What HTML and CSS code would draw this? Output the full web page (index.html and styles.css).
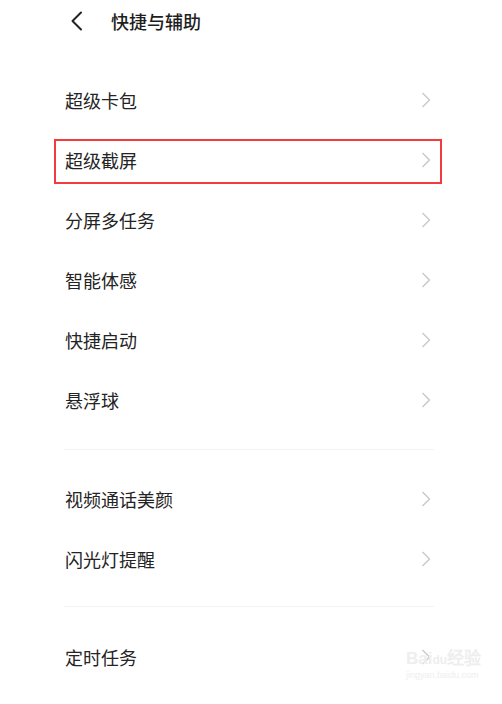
FILE: index.html
```html
<!DOCTYPE html>
<html lang="zh-CN">
<head>
<meta charset="utf-8">
<title>快捷与辅助</title>
<link rel="stylesheet" href="styles.css">
</head>
<body>
<div class="page">
  <header class="header">
    <svg class="back" width="14" height="20" viewBox="0 0 14 20"><path d="M11 1.5 L2.5 10 L11 18.5" fill="none" stroke="#222" stroke-width="2" stroke-linecap="round" stroke-linejoin="round"/></svg>
    <h1 class="title">快捷与辅助</h1>
  </header>
  <section class="group first">
    <div class="row"><span class="label">超级卡包</span><svg class="chev" width="10" height="16" viewBox="0 0 10 16"><path d="M1.5 1 L8.5 8 L1.5 15" fill="none" stroke="#c9c9c9" stroke-width="1.4"/></svg></div>
    <div class="row highlighted"><span class="label">超级截屏</span><svg class="chev" width="10" height="16" viewBox="0 0 10 16"><path d="M1.5 1 L8.5 8 L1.5 15" fill="none" stroke="#c9c9c9" stroke-width="1.4"/></svg><div class="mark"></div></div>
    <div class="row"><span class="label">分屏多任务</span><svg class="chev" width="10" height="16" viewBox="0 0 10 16"><path d="M1.5 1 L8.5 8 L1.5 15" fill="none" stroke="#c9c9c9" stroke-width="1.4"/></svg></div>
    <div class="row"><span class="label">智能体感</span><svg class="chev" width="10" height="16" viewBox="0 0 10 16"><path d="M1.5 1 L8.5 8 L1.5 15" fill="none" stroke="#c9c9c9" stroke-width="1.4"/></svg></div>
    <div class="row"><span class="label">快捷启动</span><svg class="chev" width="10" height="16" viewBox="0 0 10 16"><path d="M1.5 1 L8.5 8 L1.5 15" fill="none" stroke="#c9c9c9" stroke-width="1.4"/></svg></div>
    <div class="row"><span class="label">悬浮球</span><svg class="chev" width="10" height="16" viewBox="0 0 10 16"><path d="M1.5 1 L8.5 8 L1.5 15" fill="none" stroke="#c9c9c9" stroke-width="1.4"/></svg></div>
  </section>
  <div class="divider"></div>
  <section class="group">
    <div class="row"><span class="label">视频通话美颜</span><svg class="chev" width="10" height="16" viewBox="0 0 10 16"><path d="M1.5 1 L8.5 8 L1.5 15" fill="none" stroke="#c9c9c9" stroke-width="1.4"/></svg></div>
    <div class="row"><span class="label">闪光灯提醒</span><svg class="chev" width="10" height="16" viewBox="0 0 10 16"><path d="M1.5 1 L8.5 8 L1.5 15" fill="none" stroke="#c9c9c9" stroke-width="1.4"/></svg></div>
  </section>
  <div class="divider second"></div>
  <section class="group">
    <div class="row"><span class="label">定时任务</span><svg class="chev" width="10" height="16" viewBox="0 0 10 16"><path d="M1.5 1 L8.5 8 L1.5 15" fill="none" stroke="#c9c9c9" stroke-width="1.4"/></svg></div>
  </section>
  <div class="watermark">
    <div class="wm-top">Bai<span class="wm-du">du</span>经验</div>
    <div class="wm-url">jingyan.baidu.com</div>
  </div>
</div>
</body>
</html>
```
FILE: styles.css
```css
* { box-sizing: border-box; margin: 0; padding: 0; }
html, body { background: #fff; }
body {
  width: 502px;
  height: 704px;
  overflow: hidden;
  font-family: "Noto Sans CJK SC", "Noto Sans", sans-serif;
  color: #222;
}
.page { position: relative; height: 704px; }
.header {
  height: 42px;
  display: flex;
  align-items: center;
  padding-left: 70px;
}
.back { display: block; }
.title {
  font-size: 18px;
  font-weight: 500;
  margin-left: 27px;
  line-height: 1;
  color: #1e1e1e;
}
.group.first { margin-top: 28px; }
.row {
  position: relative;
  height: 60px;
  display: flex;
  align-items: center;
  justify-content: space-between;
  padding: 0 71px 0 65px;
}
.label { font-size: 18px; line-height: 1; color: #242424; }
.chev { display: block; }
.mark {
  position: absolute;
  left: 54px;
  top: 9px;
  width: 388px;
  height: 45px;
  border: 2px solid #f23a40;
}
.divider {
  height: 1px;
  background: #f3f3f3;
  margin: 19px 68px 19px 64px;
}
.divider.second { margin-top: 17px; margin-bottom: 20px; }
.watermark {
  position: absolute;
  left: 406px;
  top: 650px;
  color: #eeeeee;
  font-family: "Liberation Sans", sans-serif;
  line-height: 1;
}
.wm-top { font-size: 17px; font-weight: bold; }
.wm-du { font-size: 12px; }
.wm-url { font-size: 9px; margin-top: 4px; }
```
